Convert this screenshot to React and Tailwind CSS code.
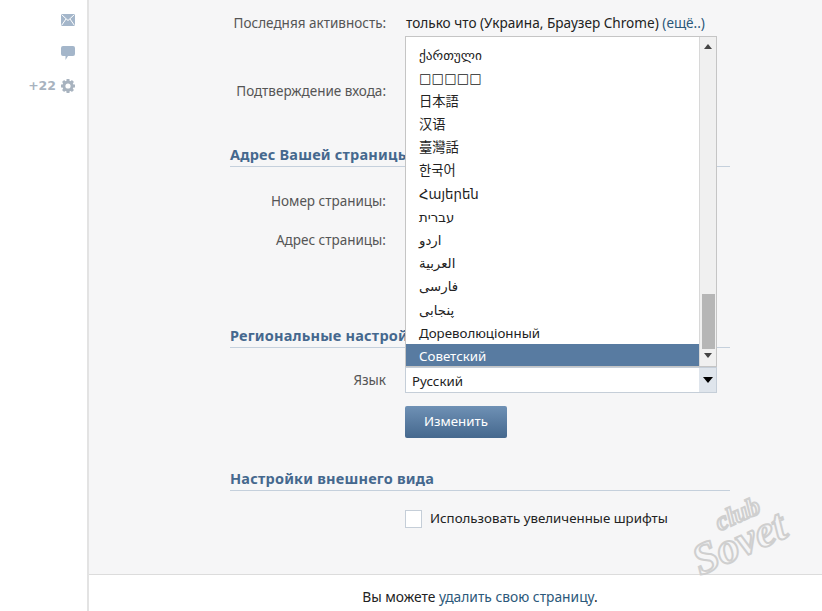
import React from "react";

const langs = [
  "ქართული",
  "□□□□□",
  "日本語",
  "汉语",
  "臺灣話",
  "한국어",
  "Հայերեն",
  "עברית",
  "اردو",
  "العربية",
  "فارسی",
  "پنجابی",
  "Дореволюціонный",
];

function Envelope() {
  return (
    <svg width="14" height="12" viewBox="0 0 14 12">
      <rect width="14" height="12" fill="#a4b6ca" />
      <path d="M0.5 0.5L7 6.5L13.5 0.5M0.5 11.5L5 5M13.5 11.5L9 5" fill="none" stroke="#fff" strokeWidth="1" />
    </svg>
  );
}
function Bubble() {
  return (
    <svg width="14" height="14" viewBox="0 0 14 14">
      <path d="M2 0H12A2 2 0 0 1 14 2V8A2 2 0 0 1 12 10H7L4.5 14V10H2A2 2 0 0 1 0 8V2A2 2 0 0 1 2 0Z" fill="#a4b6ca" />
    </svg>
  );
}
function Gear() {
  const teeth = [0, 45, 90, 135];
  return (
    <svg width="14" height="14" viewBox="0 0 14 14">
      {teeth.map((a) => (
        <rect key={a} x="5.5" y="0" width="3" height="14" fill="#a8b3bf" transform={`rotate(${a} 7 7)`} />
      ))}
      <circle cx="7" cy="7" r="4.3" fill="none" stroke="#a8b3bf" strokeWidth="2.6" />
      <circle cx="7" cy="7" r="2.6" fill="#fff" />
    </svg>
  );
}

function Row({ h, label, children }) {
  return (
    <div className={`flex items-center ${h}`}>
      <div className="w-[156px] whitespace-nowrap text-right text-[13.5px] text-[#555]">{label}</div>
      <div className="ml-5 whitespace-nowrap text-[13.6px] text-[#222]">{children}</div>
    </div>
  );
}
function Heading({ children }) {
  return (
    <div className="h-[23px] border-b border-[#c5d0dc] text-[14.5px] font-bold leading-[20px] tracking-[0.2px] text-[#45688e]">
      {children}
    </div>
  );
}

export default function App() {
  return (
    <div className="flex h-[611px] w-[822px] overflow-hidden bg-white font-['Noto_Sans','DejaVu_Sans','Noto_Sans_CJK_JP',sans-serif] text-[14px]">
      <aside className="flex w-[89px] shrink-0 flex-col items-end border-r-2 border-[#e3e3e3] pr-[12px] pt-[14px]">
        <Envelope />
        <div className="mt-[20px]"><Bubble /></div>
        <div className="mt-[19px] flex items-center gap-[5px]">
          <span className="font-['DejaVu_Sans'] text-[12.5px] font-semibold leading-[14px] text-[#a8b3bf]">+22</span>
          <Gear />
        </div>
      </aside>

      <main className="flex min-w-0 flex-1 flex-col">
        <div className="relative h-[575px] border-b border-[#dcdcdc] bg-[#f6f6f7]">
          <div className="ml-[141px] w-[500px] pt-[11px]">
            <Row h="h-[24px]" label="Последняя активность:">
              только что (Украина, Браузер Chrome) <a className="text-[#2b587a]">(ещё..)</a>
            </Row>
            <Row h="mt-[44px] h-[24px]" label="Подтверждение входа:" />
            <div className="mt-[41px]"><Heading>Адрес Вашей страницы</Heading></div>
            <Row h="mt-[22px] h-[24px]" label="Номер страницы:" />
            <Row h="mt-[15px] h-[24px]" label="Адрес страницы:" />
            <div className="mt-[73px]"><Heading>Региональные настройки</Heading></div>
            <div className="mt-[19px] flex h-[26px] items-center">
              <div className="w-[156px] text-right text-[13.5px] text-[#555]">Язык</div>
              <div className="relative ml-[19px] flex h-[26px] w-[312px] border border-[#c5ced8] bg-white">
                <div className="flex-1 pl-[6px] text-[13.3px] leading-[26px] text-[#222]">Русский</div>
                <div className="flex w-[17px] items-center justify-center bg-[#dfe5ec]">
                  <span className="border-x-[5px] border-t-[6px] border-x-transparent border-t-black" />
                </div>
                <div className="absolute bottom-[25px] left-[-1px] flex h-[331px] w-[312px] border border-[#c5c5c5] bg-white">
                  <div className="flex min-w-0 flex-1 flex-col overflow-hidden pt-[5.5px]">
                    {langs.map((t) => (
                      <div key={t} className="h-[23.2px] shrink-0 pl-[13px] text-[13.3px] leading-[25px] text-[#222]">
                        {t}
                      </div>
                    ))}
                    <div className="min-h-0 flex-1 bg-[#587ba1] pl-[13px] text-[13.3px] leading-[24px] text-white">Советский</div>
                  </div>
                  <div className="relative flex w-[17px] shrink-0 flex-col items-center border-l border-[#d8d8d8] bg-[#f0f0f0]">
                    <span className="mt-[7px] border-x-[4px] border-b-[5px] border-x-transparent border-b-[#444]" />
                    <div className="mt-[245px] h-[55px] w-[13px] bg-[#b6b6b6]" />
                    <span className="mt-[4px] border-x-[4px] border-t-[5px] border-x-transparent border-t-[#444]" />
                  </div>
                </div>
              </div>
            </div>
            <div className="ml-[175px] mt-[13px] flex h-[32px] w-[102px] items-center justify-center rounded-[2px] bg-gradient-to-b from-[#6f91b5] to-[#45688e] text-[13.3px] text-white">
              Изменить
            </div>
            <div className="mt-[30px]"><Heading>Настройки внешнего вида</Heading></div>
            <div className="ml-[175px] mt-[18px] flex h-[19px] items-center gap-[8px]">
              <span className="h-[18px] w-[17px] border border-[#c5ced8] bg-white" />
              <span className="text-[13.3px] text-[#222]">Использовать увеличенные шрифты</span>
            </div>
          </div>
          <div className="absolute left-[597px] top-[506px] -rotate-[24deg] font-['Liberation_Serif',serif] text-[44px] font-bold italic leading-[32px] text-[#f6f6f7] [-webkit-text-stroke:2px_#cfcfcf]">
            <div className="pl-[36px] text-[26px] leading-[22px]">club</div>
            <div>Sovet</div>
          </div>
        </div>
        <div className="ml-[141px] flex w-[500px] flex-1 items-center justify-center pt-[8px] text-[13.8px] text-[#222]">
          <span>Вы можете <a className="text-[#2b587a]">удалить свою страницу</a>.</span>
        </div>
      </main>
    </div>
  );
}
